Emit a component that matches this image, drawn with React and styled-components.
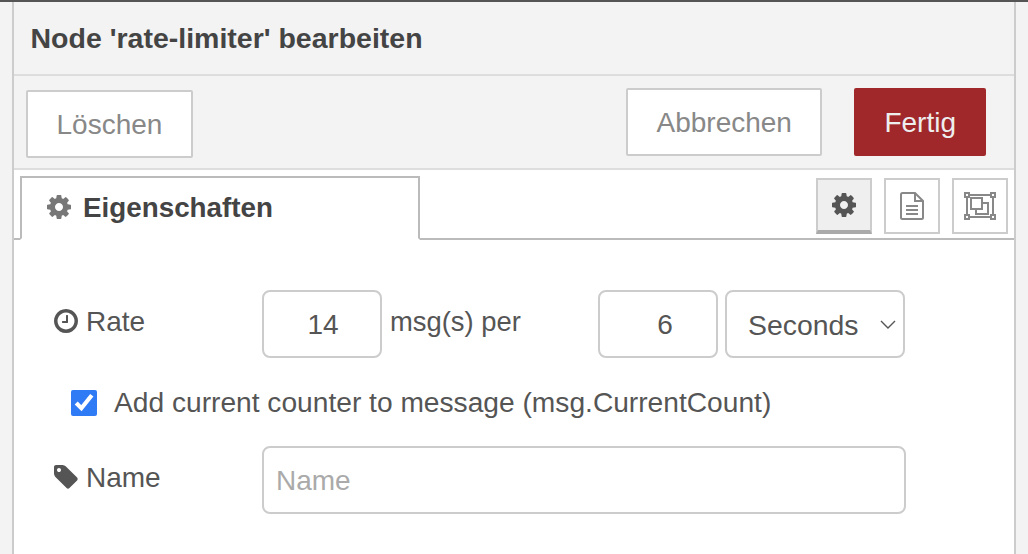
import styled, { createGlobalStyle } from "styled-components";

const GlobalStyle = createGlobalStyle`
    html, body {
        margin: 0;
        height: 100%;
        overflow: hidden;
        background: #f3f3f3;
        font-family: "Liberation Sans", Arial, sans-serif;
        font-size: 28px;
        color: #555;
    }
`;

function Cog({ size }) {
    return (
        <svg width={size} height={size} viewBox="0 0 1536 1536" fill="currentColor">
            <path d="M1024 768q0-106-75-181t-181-75-181 75-75 181 75 181 181 75 181-75 75-181zm512-109v222q0 12-8 23t-20 13l-185 28q-19 54-39 91 35 50 107 138 10 12 10 25t-9 23q-27 37-99 108t-94 71q-12 0-26-9l-138-108q-44 23-91 38-16 136-29 186-7 28-36 28h-222q-14 0-24.5-8.5t-11.5-21.5l-28-184q-49-16-90-37l-141 107q-10 9-25 9-14 0-25-11-126-114-165-168-7-10-7-23 0-12 8-23 15-21 51-66.5t54-70.5q-27-50-41-99l-183-27q-13-2-21-12.5t-8-23.5v-222q0-12 8-23t19-13l186-28q14-46 39-92-40-57-107-138-10-12-10-24 0-10 9-23 26-36 98.5-107.5t94.5-71.5q13 0 26 10l138 107q44-23 91-38 16-136 29-186 7-28 36-28h222q14 0 24.5 8.5t11.5 21.5l28 184q49 16 90 37l142-107q9-9 24-9 13 0 25 10 129 119 165 170 7 8 7 22 0 12-8 23-15 21-51 66.5t-54 70.5q26 50 41 98l183 28q13 2 21 12.5t8 23.5z" />
        </svg>
    );
}

function Clock() {
    return (
        <svg width="24" height="24" viewBox="0 0 1536 1536" fill="currentColor">
            <path d="M896 416v448q0 14-9 23t-23 9h-320q-14 0-23-9t-9-23v-64q0-14 9-23t23-9h224v-352q0-14 9-23t23-9h64q14 0 23 9t9 23zm416 352q0-148-73-273t-198-198-273-73-273 73-198 198-73 273 73 273 198 198 273 73 273-73 198-198 73-273zm224 0q0 209-103 385.5t-279.5 279.5-385.5 103-385.5-103-279.5-279.5-103-385.5 103-385.5 279.5-279.5 385.5-103 385.5 103 279.5 279.5 103 385.5z" />
        </svg>
    );
}

function Tag() {
    return (
        <svg width="24" height="24" viewBox="0 0 1536 1536" fill="currentColor">
            <path d="M448 320q0-53-37.5-90.5t-90.5-37.5-90.5 37.5-37.5 90.5 37.5 90.5 90.5 37.5 90.5-37.5 37.5-90.5zm1067 576q0 53-37 90l-491 492q-39 37-91 37-53 0-90-37l-715-716q-38-37-64.5-101t-26.5-117v-416q0-52 38-90t90-38h416q53 0 117 26.5t102 64.5l715 714q37 39 37 91z" />
        </svg>
    );
}

function FileText() {
    return (
        <svg width="24" height="28" viewBox="0 0 24 28" fill="none" stroke="currentColor" strokeWidth="2">
            <path d="M1 2.5a1.5 1.5 0 0 1 1.5-1.5H15l8 8v16.5a1.5 1.5 0 0 1-1.5 1.5H2.5A1.5 1.5 0 0 1 1 25.5z" />
            <path d="M15 1v8h8" />
            <path d="M6 14h12M6 18h12M6 22h12" />
        </svg>
    );
}

function ObjectGroup() {
    return (
        <svg width="32" height="28" viewBox="0 0 32 28" fill="none" stroke="currentColor" strokeWidth="2">
            <rect x="1" y="1" width="4" height="4" />
            <rect x="27" y="1" width="4" height="4" />
            <rect x="1" y="23" width="4" height="4" />
            <rect x="27" y="23" width="4" height="4" />
            <path d="M5 3h22M5 25h22M3 5v18M29 5v18" />
            <rect x="7" y="6" width="11" height="11" />
            <path d="M18 11h6v11H12v-5" />
        </svg>
    );
}

function Chevron() {
    return (
        <svg width="16" height="9" viewBox="0 0 16 9" fill="none" stroke="currentColor" strokeWidth="1.4">
            <path d="M1 1l7 7 7-7" />
        </svg>
    );
}

export default function App() {
    return (
        <>
            <GlobalStyle />
            <PAGE>
                <PANEL>
                    <TITLE>Node 'rate-limiter' bearbeiten</TITLE>
                    <TOOLBAR>
                        <BUTTON $low>Löschen</BUTTON>
                        <SPACER />
                        <BUTTON>Abbrechen</BUTTON>
                        <BUTTON $primary>Fertig</BUTTON>
                    </TOOLBAR>
                    <TABS>
                        <TAB>
                            <TABICON><Cog size={24} /></TABICON>
                            <TABTEXT>Eigenschaften</TABTEXT>
                        </TAB>
                        <TABLINKS>
                            <TABLINK $active><Cog size={24} /></TABLINK>
                            <TABLINK><FileText /></TABLINK>
                            <TABLINK><ObjectGroup /></TABLINK>
                        </TABLINKS>
                    </TABS>
                    <FORM>
                        <ROW>
                            <LABEL><Clock /> Rate</LABEL>
                            <NUMBER defaultValue="14" $shift={2} />
                            <UNIT>msg(s) per</UNIT>
                            <NUMBER defaultValue="6" $shift={14} />
                            <SELECTWRAP>
                                <SELECT defaultValue="Seconds">
                                    <option>Seconds</option>
                                    <option>Minutes</option>
                                    <option>Hours</option>
                                </SELECT>
                                <CHEVRON><Chevron /></CHEVRON>
                            </SELECTWRAP>
                        </ROW>
                        <CHECKROW>
                            <CHECK type="checkbox" defaultChecked />
                            <CHECKTEXT>Add current counter to message (msg.CurrentCount)</CHECKTEXT>
                        </CHECKROW>
                        <ROW>
                            <LABEL><Tag /> Name</LABEL>
                            <TEXT placeholder="Name" />
                        </ROW>
                    </FORM>
                </PANEL>
            </PAGE>
        </>
    );
}

const PAGE = styled.div`
    height: 100vh;
    box-sizing: border-box;
    padding: 0 12px;
    border-top: 2px solid #555;
    overflow: hidden;
`;
const PANEL = styled.div`
    display: flex;
    flex-direction: column;
    height: 100%;
    box-sizing: border-box;
    border-left: 2px solid #ccc;
    border-right: 2px solid #ccc;
    background: #fff;
`;
const TITLE = styled.div`
    height: 74px;
    flex-shrink: 0;
    box-sizing: border-box;
    padding-left: 16.5px;
    display: flex;
    align-items: center;
    font-size: 28.5px;
    font-weight: bold;
    color: #444;
    background: #f3f3f3;
    border-bottom: 2px solid #ddd;
`;
const TOOLBAR = styled.div`
    display: flex;
    align-items: flex-start;
    gap: 32px;
    height: 94px;
    flex-shrink: 0;
    box-sizing: border-box;
    padding: 12px 28px 0 12px;
    background: #f3f3f3;
    border-bottom: 2px solid #ddd;
`;
const SPACER = styled.div`
    flex: 1;
`;
const BUTTON = styled.button`
    height: 68px;
    box-sizing: border-box;
    padding: 2px ${p => (p.$primary ? "28px" : "28.5px")} 0;
    margin-top: ${p => (p.$low ? "2px" : "0")};
    font: inherit;
    color: ${p => (p.$primary ? "#eee" : "#888")};
    background: ${p => (p.$primary ? "#a0282b" : "#fff")};
    border: 2px solid ${p => (p.$primary ? "#a0282b" : "#ccc")};
    border-radius: 2px;
`;
const TABS = styled.div`
    display: flex;
    justify-content: space-between;
    height: 70px;
    flex-shrink: 0;
    box-sizing: border-box;
    padding: 6px 6px 0 6px;
    border-bottom: 2px solid #bbb;
    background: #fff;
`;
const TAB = styled.div`
    display: flex;
    align-items: center;
    gap: 12px;
    width: 400px;
    height: 64px;
    box-sizing: border-box;
    padding: 0 0 2px 25px;
    font-weight: bold;
    color: #444;
    background: #fff;
    border: 2px solid #bbb;
    border-bottom: 2px solid #fff;
`;
const TABTEXT = styled.span`
    padding-top: 2px;
    font-size: 27.8px;
`;
const TABICON = styled.span`
    display: flex;
    color: #777;
`;
const TABLINKS = styled.div`
    display: flex;
    gap: 12px;
    padding-top: 2px;
`;
const TABLINK = styled.div`
    display: flex;
    align-items: center;
    justify-content: center;
    width: 56px;
    height: 56px;
    box-sizing: border-box;
    color: ${p => (p.$active ? "#555" : "#888")};
    background: ${p => (p.$active ? "#efefef" : "#fff")};
    border: 2px solid #ccc;
    border-bottom: ${p => (p.$active ? "4px solid #aaa" : "2px solid #ccc")};
`;
const FORM = styled.form`
    flex: 1;
    display: flex;
    flex-direction: column;
    padding: 50px 0 0 40px;
`;
const ROW = styled.div`
    display: flex;
    align-items: flex-start;
`;
const LABEL = styled.label`
    display: flex;
    align-items: center;
    gap: 8px;
    width: 208px;
    height: 64px;
    flex-shrink: 0;
    svg {
        margin-top: -2px;
    }
`;
const INPUTBASE = styled.input`
    height: 68px;
    box-sizing: border-box;
    font: inherit;
    color: #555;
    background: #fff;
    border: 2px solid #ccc;
    border-radius: 8px;
    outline: none;
`;
const NUMBER = styled(INPUTBASE)`
    width: 120px;
    padding: 2px 0 0 ${p => p.$shift}px;
    text-align: center;
`;
const UNIT = styled.span`
    display: flex;
    align-items: center;
    width: 216px;
    height: 64px;
    padding-left: 8px;
    box-sizing: border-box;
    font-size: 27.4px;
`;
const SELECTWRAP = styled.div`
    position: relative;
    width: 180px;
    margin-left: 7px;
`;
const SELECT = styled.select`
    width: 100%;
    height: 68px;
    box-sizing: border-box;
    padding: 2px 0 0 21px;
    appearance: none;
    font: inherit;
    font-size: 28.4px;
    color: #555;
    background: #fff;
    border: 2px solid #ccc;
    border-radius: 8px;
    outline: none;
`;
const CHEVRON = styled.span`
    position: absolute;
    right: 9px;
    top: 30px;
    display: flex;
    pointer-events: none;
`;
const CHECKROW = styled.label`
    display: flex;
    align-items: center;
    gap: 17px;
    height: 38px;
    margin: 26px 0 24px;
    padding-left: 17px;
`;
const CHECK = styled.input`
    width: 26px;
    height: 26px;
    margin: 0;
    accent-color: #2f7bf6;
`;
const CHECKTEXT = styled.span`
    font-size: 28.16px;
`;
const TEXT = styled(INPUTBASE)`
    width: 644px;
    padding: 2px 12px 0;
    &::placeholder {
        color: #aaa;
    }
`;
